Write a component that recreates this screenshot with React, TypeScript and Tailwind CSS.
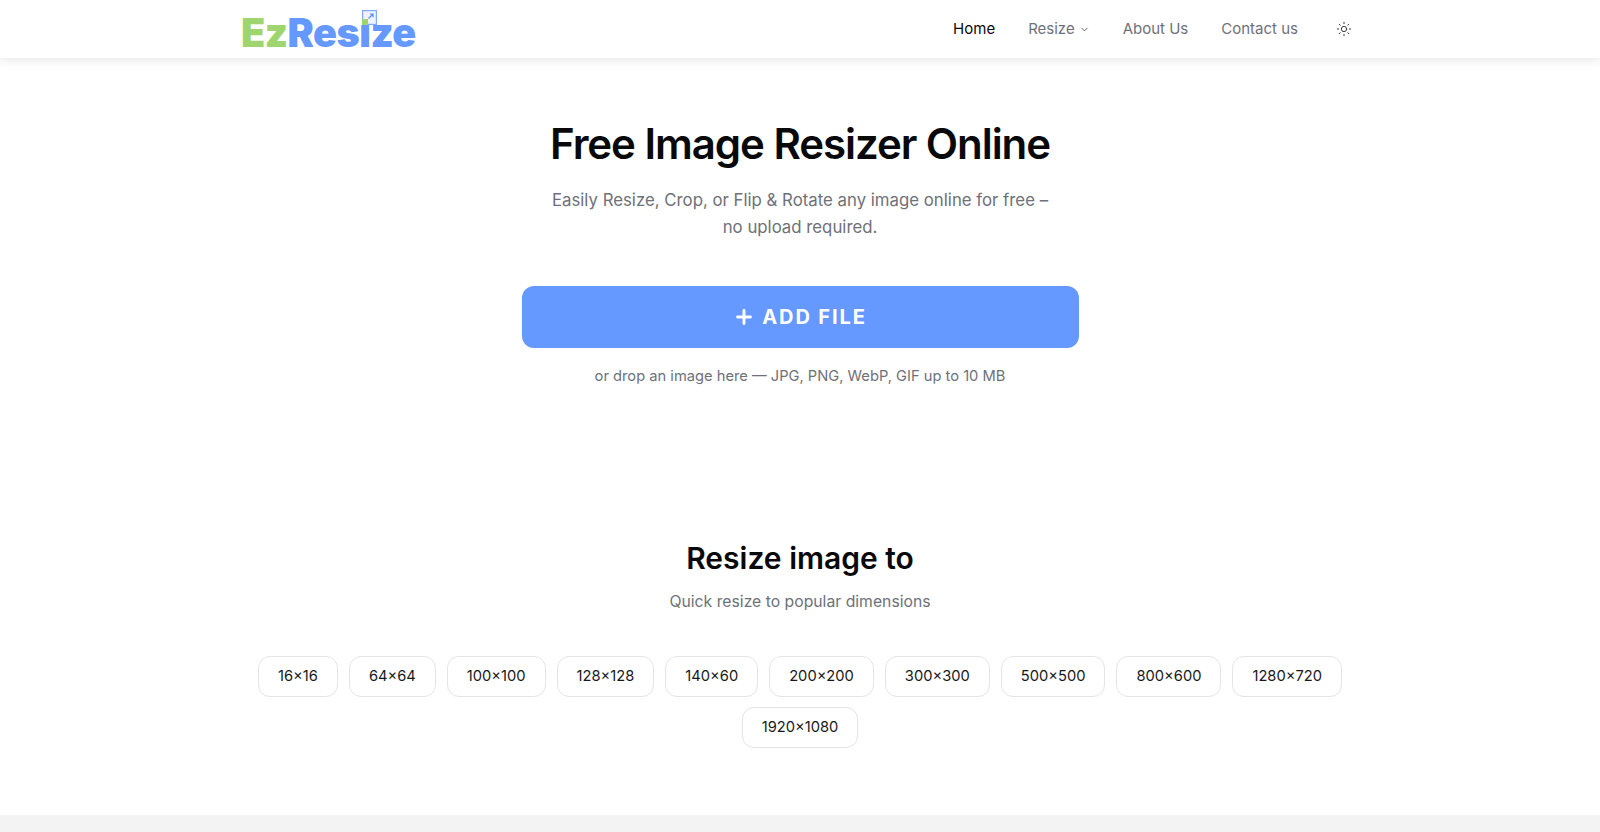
import { ChevronDown, Plus, Sun } from "lucide-react"

const sizes = ["16×16", "64×64", "100×100", "128×128", "140×60", "200×200", "300×300", "500×500", "800×600", "1280×720", "1920×1080"]

function Logo() {
    return (
        <a href="#" className="relative block w-[173px] h-[58px]">
            <span className="absolute left-[-1px] top-[8px] text-[39.5px] leading-[50px] font-black tracking-[-0.5px] whitespace-nowrap">
                <span className="text-[#9fd56f]">Ez</span>
                <span className="text-[#6699ff]">Resize</span>
            </span>
            <svg viewBox="0 0 15 15" className="absolute left-[120px] top-[10px] w-[15px] h-[15px] overflow-visible">
                {/* hides the dot of the i, the green square stands in for it */}
                <rect x="-4" y="4" width="10" height="11" fill="#ffffff" />
                <rect x="0.6" y="0.6" width="13.8" height="13.8" fill="#eef3ff" stroke="#7fa9ff" strokeWidth="1.2" />
                <rect x="0" y="9" width="6" height="6" fill="#9fd56f" />
                <path d="M6.5 8.5 L11 4 M7.8 4 H11 V7.2" fill="none" stroke="#5b8ff5" strokeWidth="1.2" />
            </svg>
        </a>
    )
}

export default function App() {
    return (
        <div className="min-h-screen flex flex-col bg-white font-['Inter',sans-serif]">
            <header className="h-[58px] bg-white shadow-[0_2px_10px_rgba(0,0,0,0.1)]">
                <div className="flex justify-between items-center pl-[242px] pr-[248px]">
                    <Logo />
                    <nav className="flex items-center gap-[33px] text-[15px] text-[#6e7179]">
                        <a href="#" className="text-[#09090b]">Home</a>
                        <a href="#" className="flex items-center gap-1">
                            Resize
                            <ChevronDown className="w-[11px] h-[11px] text-[#52525b]" />
                        </a>
                        <a href="#">About Us</a>
                        <a href="#">Contact us</a>
                        <Sun className="w-4 h-4 text-[#3f3f46] ml-[5px]" strokeWidth={1.5} />
                    </nav>
                </div>
            </header>
            <main className="flex-1 flex flex-col items-center">
                <h1 className="mt-[62px] text-[42px] leading-[48px] font-semibold tracking-[-1.05px] text-[#09090b]">Free Image Resizer Online</h1>
                <p className="mt-[19px] w-[520px] text-center text-[16.8px] leading-[27px] text-[#6e7179]">
                    Easily Resize, Crop, or Flip &amp; Rotate any image online for free – no upload required.
                </p>
                <button className="mt-[45px] w-[557px] h-[62px] rounded-xl bg-[#6699ff] text-white flex items-center justify-center gap-[7px] text-[20px] font-bold tracking-[1.9px]">
                    <Plus className="w-[22px] h-[22px]" strokeWidth={3.2} />
                    ADD FILE
                </button>
                <p className="mt-[18px] text-[14.7px] leading-[20px] text-[#6e7179]">or drop an image here — JPG, PNG, WebP, GIF up to 10 MB</p>
                <h2 className="mt-[154px] text-[30px] leading-[36px] font-semibold text-[#09090b]">Resize image to</h2>
                <p className="mt-[14px] text-[15.75px] leading-[24px] text-[#6e7179]">Quick resize to popular dimensions</p>
                <div className="mt-[42px] w-[1100px] flex flex-wrap justify-center gap-[10px_11px]">
                    {sizes.map((s) => (
                        <button key={s} className="h-[41px] px-[19px] rounded-xl border border-[#e4e4e7] bg-white text-[14.7px] text-[#18181b]">
                            {s}
                        </button>
                    ))}
                </div>
            </main>
            <footer className="h-[17px] bg-[#f3f3f3]" />
        </div>
    )
}
